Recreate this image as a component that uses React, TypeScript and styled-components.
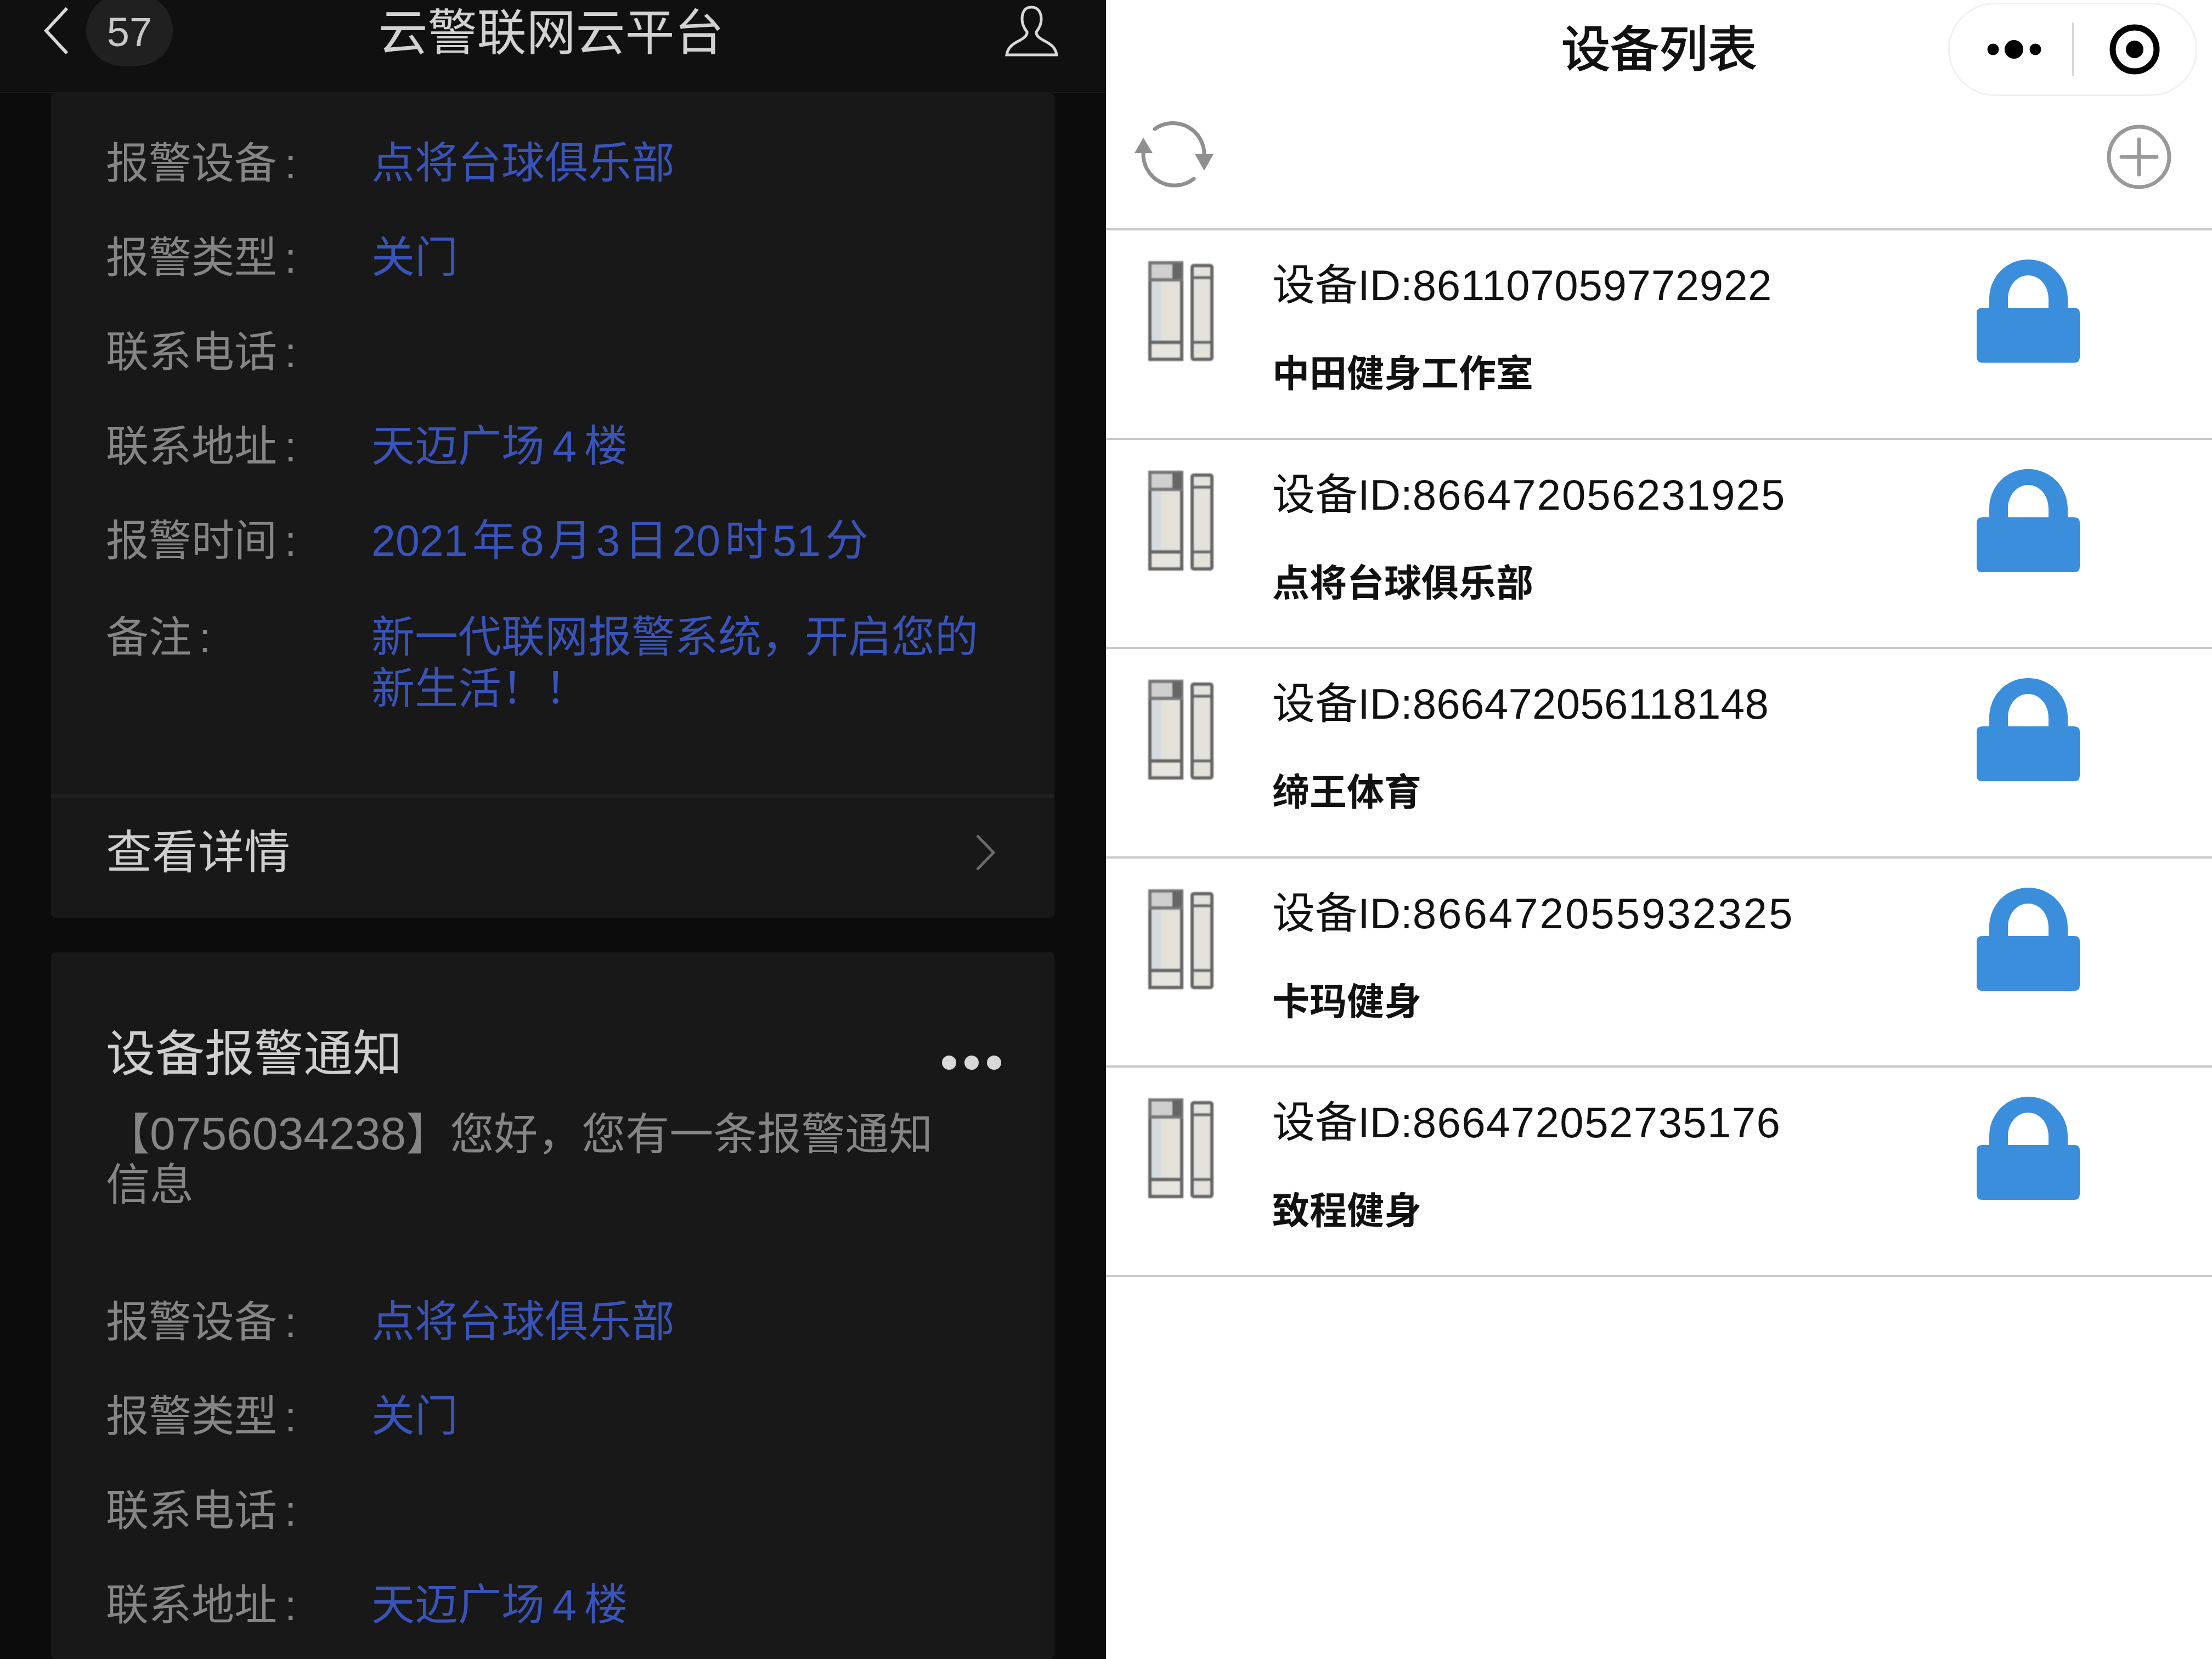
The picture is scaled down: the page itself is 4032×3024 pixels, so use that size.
import styled, { createGlobalStyle } from 'styled-components';

const GlobalStyle = createGlobalStyle`
	html, body {
		margin: 0;
		padding: 0;
		background: #fff;
	}
	* {
		box-sizing: border-box;
	}
`;

const Screen = styled.div`
	width: 4032px;
	height: 3024px;
	display: grid;
	grid-template-columns: 2016px 2016px;
	overflow: hidden;
	font-family: 'Liberation Sans', 'Noto Sans CJK SC', sans-serif;
`;

const DarkPanel = styled.section`
	height: 3024px;
	display: flex;
	flex-direction: column;
	overflow: hidden;
	background: #0c0c0c;
`;

const DarkHeader = styled.header`
	height: 170px;
	flex: none;
	display: grid;
	grid-template-columns: 1fr auto 1fr;
	padding: 0 87px 0 80px;
	background: #101010;
	border-bottom: 2px solid #1a1a1a;
`;

const HeaderLeft = styled.div`
	display: flex;
	align-items: flex-start;
	gap: 32px;
	padding-top: 13px;
`;

const Badge = styled.div`
	width: 158px;
	height: 130px;
	margin-top: -23px;
	display: flex;
	align-items: center;
	justify-content: center;
	border-radius: 65px;
	background: #202020;
	color: #c8c8c8;
	font-size: 74px;
	padding-top: 6px;
`;

const DarkTitle = styled.h1`
	margin: 0;
	padding-top: 10px;
	font-size: 90px;
	line-height: 100px;
	font-weight: 400;
	color: #d2d2d2;
`;

const HeaderRight = styled.div`
	display: flex;
	justify-content: flex-end;
	align-items: flex-start;
	padding-top: 10px;
`;

const CardStack = styled.div`
	flex: 1;
	display: flex;
	flex-direction: column;
	gap: 63px;
	padding: 0 94px 0 93px;
`;

const Card = styled.article<{ $grow?: boolean }>`
	flex: ${(p) => (p.$grow ? 1 : 'none')};
	border-radius: 8px;
	background: #181818;
`;

const CardBody = styled.div<{ $top: number; $bottom: number }>`
	padding: ${(p) => p.$top}px 120px ${(p) => p.$bottom}px 100px;
`;

const Fields = styled.dl`
	margin: 0;
	display: flex;
	flex-direction: column;
	gap: 78px;
`;

const Field = styled.div<{ $note?: boolean }>`
	display: grid;
	grid-template-columns: 484px 1fr;
	margin-top: ${(p) => (p.$note ? 4 : 0)}px;
`;

const Label = styled.dt`
	font-size: 78px;
	line-height: 94px;
	word-spacing: -8px;
	color: #858585;
`;

const Value = styled.dd<{ $wordGap?: number }>`
	margin: 0;
	font-size: 79px;
	line-height: 94px;
	word-spacing: ${(p) => p.$wordGap ?? -14}px;
	color: #3a53b8;
`;

const Footer = styled.div`
	height: 225px;
	display: flex;
	align-items: center;
	justify-content: space-between;
	padding: 0 108px 20px 100px;
	border-top: 6px solid #202020;
`;

const FooterText = styled.span`
	font-size: 84px;
	line-height: 94px;
	color: #cfcfcf;
`;

const CardHead = styled.div`
	display: flex;
	align-items: center;
	justify-content: space-between;
`;

const CardTitle = styled.h2`
	margin: 0;
	font-size: 90px;
	line-height: 100px;
	font-weight: 400;
	color: #cfcfcf;
`;

const Intro = styled.p`
	margin: 49px 0 157px;
	font-size: 80px;
	line-height: 92px;
	color: #858585;
	text-spacing-trim: space-all;
`;

const IntroCode = styled.span`
	font-size: 84px;
`;

const LightPanel = styled.section`
	height: 3024px;
	background: #fff;
	overflow: hidden;
`;

const TopBar = styled.header`
	height: 180px;
	display: grid;
	grid-template-columns: 1fr auto 1fr;
	align-items: center;
	padding: 0 27px 0 27px;
`;

const LightTitle = styled.h1`
	margin: 0;
	font-size: 89px;
	line-height: 100px;
	font-weight: 400;
	color: #111;
	-webkit-text-stroke: 2px #111;
`;

const CapsuleSlot = styled.div`
	display: flex;
	justify-content: flex-end;
`;

const Capsule = styled.div`
	width: 454px;
	height: 170px;
	margin-top: -1px;
	display: flex;
	align-items: center;
	border: 3px solid #f0f0f0;
	border-radius: 85px;
`;

const CapsuleCell = styled.div`
	flex: 1;
	height: 98px;
	display: flex;
	align-items: center;
	justify-content: center;
`;

const CapsuleDivider = styled.div`
	width: 3px;
	height: 98px;
	background: #d8d8d8;
`;

const Toolbar = styled.div`
	height: 240px;
	display: flex;
	align-items: center;
	justify-content: space-between;
	padding: 0 73px 34px 51px;
	border-bottom: 4px solid #c9c9c9;
`;

const DeviceRow = styled.div`
	height: 381.5px;
	display: grid;
	grid-template-columns: 226px 1fr 188px;
	padding: 53px 241px 0 77px;
	border-bottom: 4px solid #c9c9c9;
`;

const DoorWrap = styled.div`
	padding-top: 3px;
	filter: blur(1.2px);
`;

const DeviceId = styled.div`
	font-size: 78px;
	line-height: 94px;
	color: #111;
`;

const IdDigits = styled.span<{ $track: number }>`
	letter-spacing: ${(p) => p.$track}px;
`;

const DeviceName = styled.div`
	margin-top: 74px;
	font-size: 68px;
	line-height: 80px;
	font-weight: 700;
	color: #111;
`;

function BackIcon() {
	return (
		<svg width='45' height='86' viewBox='0 0 45 86' fill='none'>
			<path d='M42 2 L4 43 L42 84' stroke='#d8d8d8' strokeWidth='6' />
		</svg>
	);
}

function UserIcon() {
	return (
		<svg width='97' height='93' viewBox='0 0 97 93' fill='none' stroke='#d8d8d8' strokeWidth='5'>
			<path d='M48 3 C35 3 31 14 31 25 C31 36 36 43 40 48 C41 54 36 58 28 63 C14 70 5 76 3 90 H94 C92 76 83 70 69 63 C61 58 56 54 57 48 C61 43 66 36 66 25 C66 14 61 3 48 3 Z' />
		</svg>
	);
}

function ChevronRight() {
	return (
		<svg width='36' height='66' viewBox='0 0 36 66' fill='none'>
			<path d='M3 2 L33 33 L3 64' stroke='#6a6a6a' strokeWidth='5' />
		</svg>
	);
}

function CardMore() {
	return (
		<svg width='110' height='28' viewBox='0 0 110 28' fill='#d8d8d8' style={{ marginTop: 32, marginRight: -24 }}>
			<circle cx='14' cy='14' r='13' />
			<circle cx='55' cy='14' r='13' />
			<circle cx='96' cy='14' r='13' />
		</svg>
	);
}

function CapsuleDots() {
	return (
		<svg width='114' height='36' viewBox='0 0 114 36' fill='#000'>
			<circle cx='25' cy='18' r='10.5' />
			<circle cx='63' cy='18' r='17' />
			<circle cx='102' cy='18' r='10.5' />
		</svg>
	);
}

function CapsuleTarget() {
	return (
		<svg width='92' height='92' viewBox='0 0 92 92'>
			<circle cx='46' cy='46' r='40' fill='none' stroke='#000' strokeWidth='11' />
			<circle cx='46' cy='46' r='16' fill='#000' />
		</svg>
	);
}

function RefreshIcon() {
	return (
		<svg width='146' height='128' viewBox='26 29 146 128' fill='none'>
			<path d='M64 47 A57 57 0 0 1 154 96' stroke='#8f8f8f' strokeWidth='7' strokeLinecap='round' />
			<path d='M135 138 A57 57 0 0 1 43 90' stroke='#8f8f8f' strokeWidth='7' strokeLinecap='round' />
			<path d='M137 93 H171 L154 123 Z' fill='#8f8f8f' />
			<path d='M27 91 H60 L43 63 Z' fill='#8f8f8f' />
		</svg>
	);
}

function PlusIcon() {
	return (
		<svg width='120' height='120' viewBox='0 0 120 120' fill='none' stroke='#999' style={{ marginTop: 10 }}>
			<circle cx='60' cy='60' r='55' strokeWidth='7' />
			<path d='M60 28 V92 M28 60 H92' strokeWidth='7' strokeLinecap='round' />
		</svg>
	);
}

function DoorIcon() {
	return (
		<svg width='119' height='182' viewBox='0 0 119 182'>
			<rect x='3' y='3' width='58' height='176' rx='4' fill='#e3e1da' stroke='#666' strokeWidth='6' />
			<rect x='7' y='34' width='16' height='112' fill='#d5dbe2' />
			<rect x='3' y='3' width='58' height='31' fill='#cfcfcf' stroke='#777' strokeWidth='6' />
			<rect x='44' y='4' width='17' height='28' fill='#666' />
			<rect x='3' y='148' width='58' height='31' fill='#e6e5e0' stroke='#666' strokeWidth='6' />
			<rect x='80' y='8' width='36' height='171' rx='3' fill='#e5e2dc' stroke='#666' strokeWidth='6' />
			<path d='M80 30 H116 M80 148 H116' stroke='#666' strokeWidth='5' />
		</svg>
	);
}

function LockIcon() {
	return (
		<svg width='188' height='188' viewBox='0 0 188 188' fill='#3a8edb'>
			<path
				fillRule='evenodd'
				d='M23 88 V72 C23 32 54 0 94 0 C134 0 166 32 166 72 V88 H178 Q188 88 188 98 V178 Q188 188 178 188 H10 Q0 188 0 178 V98 Q0 88 10 88 Z M57 88 H131 V72 C131 48 115 29 94 29 C73 29 57 48 57 72 Z'
			/>
		</svg>
	);
}

const alarmFields = [
	{ label: '报警设备 :', value: '点将台球俱乐部' },
	{ label: '报警类型 :', value: '关门' },
	{ label: '联系电话 :', value: '' },
	{ label: '联系地址 :', value: '天迈广场 4 楼', wordGap: -8 },
];

// track: the reference font has proportional digits, Liberation's are tabular
const devices = [
	{ id: '861107059772922', name: '中田健身工作室', track: 0.7 },
	{ id: '866472056231925', name: '点将台球俱乐部', track: 2 },
	{ id: '866472056118148', name: '缔王体育', track: 0.3 },
	{ id: '866472055932325', name: '卡玛健身', track: 3 },
	{ id: '866472052735176', name: '致程健身', track: 1.4 },
];

function AlarmRows() {
	return (
		<>
			{alarmFields.map((f) => (
				<Field key={f.label}>
					<Label>{f.label}</Label>
					<Value $wordGap={f.wordGap}>{f.value}</Value>
				</Field>
			))}
		</>
	);
}

export default function App() {
	return (
		<>
			<GlobalStyle />
			<Screen>
				<DarkPanel>
					<DarkHeader>
						<HeaderLeft>
							<BackIcon />
							<Badge>57</Badge>
						</HeaderLeft>
						<DarkTitle>云警联网云平台</DarkTitle>
						<HeaderRight>
							<UserIcon />
						</HeaderRight>
					</DarkHeader>
					<CardStack>
						<Card>
							<CardBody $top={81} $bottom={145}>
								<Fields>
									<AlarmRows />
									<Field>
										<Label>报警时间 :</Label>
										<Value>2021 年 8 月 3 日 20 时 51 分</Value>
									</Field>
									<Field $note>
										<Label>备注 :</Label>
										<Value>新一代联网报警系统，开启您的新生活！！</Value>
									</Field>
								</Fields>
							</CardBody>
							<Footer>
								<FooterText>查看详情</FooterText>
								<ChevronRight />
							</Footer>
						</Card>
						<Card $grow>
							<CardBody $top={135} $bottom={0}>
								<CardHead>
									<CardTitle>设备报警通知</CardTitle>
									<CardMore />
								</CardHead>
								<Intro>
									【<IntroCode>0756034238</IntroCode>】您好，您有一条报警通知
									<br />
									信息
								</Intro>
								<Fields>
									<AlarmRows />
								</Fields>
							</CardBody>
						</Card>
					</CardStack>
				</DarkPanel>
				<LightPanel>
					<TopBar>
						<div />
						<LightTitle>设备列表</LightTitle>
						<CapsuleSlot>
							<Capsule>
								<CapsuleCell>
									<CapsuleDots />
								</CapsuleCell>
								<CapsuleDivider />
								<CapsuleCell>
									<CapsuleTarget />
								</CapsuleCell>
							</Capsule>
						</CapsuleSlot>
					</TopBar>
					<Toolbar>
						<RefreshIcon />
						<PlusIcon />
					</Toolbar>
					{devices.map((d) => (
						<DeviceRow key={d.id}>
							<DoorWrap>
								<DoorIcon />
							</DoorWrap>
							<div>
								<DeviceId>
									设备ID:<IdDigits $track={d.track}>{d.id}</IdDigits>
								</DeviceId>
								<DeviceName>{d.name}</DeviceName>
							</div>
							<LockIcon />
						</DeviceRow>
					))}
				</LightPanel>
			</Screen>
		</>
	);
}
